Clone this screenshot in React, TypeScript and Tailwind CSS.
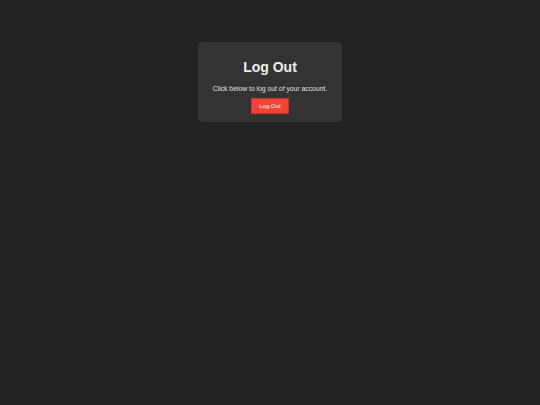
export default function App() {
  return (
    <div className="min-h-screen bg-[#222222] flex justify-center pt-[42px] font-['Liberation_Sans',Arial,sans-serif]">
      <div className="self-start w-[144px] h-[80px] rounded-[4px] bg-[#333333] flex flex-col items-center pt-[16px] text-[#eeeeee]">
        <h1 className="text-[14px] leading-[18px] font-bold">Log Out</h1>
        <p className="mt-[7.5px] text-[6.8px] leading-[9px] text-[#e0e0e0]">Click below to log out of your account.</p>
        <button className="mt-[5.5px] w-[38px] h-[16px] bg-[#f44336] border border-[#c4372c] text-white text-[6px] leading-none">
          Log Out
        </button>
      </div>
    </div>
  );
}
